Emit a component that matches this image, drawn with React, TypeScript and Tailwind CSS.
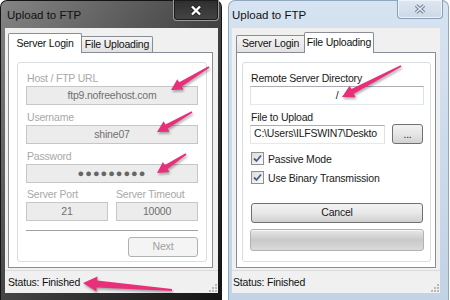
import React from "react";

function arrowPoints(
  x1: number, y1: number, x2: number, y2: number,
  tw = 1, bw = 2.2, hw = 6, hl = 11
) {
  const dx = x2 - x1, dy = y2 - y1;
  const L = Math.hypot(dx, dy);
  const ux = dx / L, uy = dy / L;
  const nx = -uy, ny = ux;
  const bx = x2 - ux * hl, by = y2 - uy * hl;
  const p = [
    [x1 + nx * tw, y1 + ny * tw],
    [bx + nx * bw, by + ny * bw],
    [bx + nx * hw, by + ny * hw],
    [x2, y2],
    [bx - nx * hw, by - ny * hw],
    [bx - nx * bw, by - ny * bw],
    [x1 - nx * tw, y1 - ny * tw],
  ];
  return p.map((q) => q.map((v) => v.toFixed(1)).join(",")).join(" ");
}

const arrows: [number, number, number, number, number, number, number, number][] = [
  [209, 67, 171, 90, 0.9, 2.4, 6, 11],
  [192, 112, 157, 132, 0.9, 2.4, 6, 11],
  [186, 154, 157, 173, 0.9, 2.4, 6, 11],
  [172, 290, 83, 283, 1, 3.5, 7.5, 14],
  [401, 66, 342, 97, 0.9, 2.6, 6.5, 12],
];

function Grip() {
  return (
    <svg width="8" height="8" viewBox="0 0 8 8" className="shrink-0">
      {[
        [6, 0], [6, 3], [3, 3], [6, 6], [3, 6], [0, 6],
      ].map(([x, y], i) => (
        <rect key={i} x={x} y={y} width="2" height="2" fill="#b9b9b9" />
      ))}
    </svg>
  );
}

function Check({ label }: { label: string }) {
  return (
    <div className="flex items-center h-[13px] gap-[4px] pl-[1px]">
      <div className="w-[13px] h-[13px] border border-[#8e8f8f] bg-gradient-to-br from-[#dcdcdc] to-[#fbfbfb] flex items-center justify-center">
        <svg width="11" height="11" viewBox="0 0 11 11">
          <path d="M2 5.5 L4.5 8 L9 2.5" fill="none" stroke="#4a5f84" strokeWidth="1.8" />
        </svg>
      </div>
      <span className="text-[#1a1a1a] leading-[12px]">{label}</span>
    </div>
  );
}

function LeftWindow() {
  return (
    <div className="relative w-[222px] h-[300px] shrink-0 rounded-t-[7px] border border-[#141414] border-b-0 bg-gradient-to-br from-[#858585] via-[#454545] to-[#141414] flex flex-col">
      <div className="h-[27px] flex items-start">
        <span className="pl-[6px] pt-[6px] text-[11.5px] leading-[16px] text-[#111] tracking-normal">Upload to FTP</span>
        <div className="ml-auto mr-[2px] -mt-[1px] w-[46px] h-[21px] rounded-b-[4px] border border-[#9a9a9a] border-t-0 bg-gradient-to-b from-[#2e2e2e] to-[#454545] shadow-[inset_0_0_0_1px_#1a1a1a] flex items-center justify-center">
          <svg width="12" height="11" viewBox="0 0 12 11">
            <path d="M2 1.5 L10 9.5 M10 1.5 L2 9.5" stroke="#222" strokeWidth="4" />
            <path d="M2 1.5 L10 9.5 M10 1.5 L2 9.5" stroke="#fff" strokeWidth="2.4" />
          </svg>
        </div>
      </div>
      <div className="ml-[4px] w-[213px] flex-1 mb-[7px] bg-[#f0f0f0] flex flex-col">
        <div className="pt-[5px] pl-[3px]">
          <div className="flex items-end h-[19px]">
            <div className="relative z-10 h-[20px] -mb-[1px] w-[74px] bg-white border border-[#898c95] border-b-0 rounded-t-[2px] flex items-center justify-center text-[#111]">
              Server Login
            </div>
            <div className="h-[16px] w-[71px] border border-[#898c95] border-l-0 border-b-0 rounded-tr-[2px] bg-gradient-to-b from-[#f5f5f5] to-[#e2e2e2] flex items-center justify-center text-[#111]">
              File Uploading
            </div>
          </div>
          <div className="w-[205px] h-[216px] bg-white border border-[#898c95] pt-[9px] pl-[8px]">
            <div className="w-[190px] h-[200px] border border-[#d8dde1] rounded-[3px] pt-[9px] pl-[8px] flex flex-col text-[#a8a8a8]">
              <span className="pl-[1px] leading-[12px]">Host / FTP URL</span>
              <div className="mt-[2px] w-[172px] h-[19px] border border-[#c6c6c6] bg-[#ececec] text-[#707070] flex items-center justify-center">ftp9.nofreehost.com</div>
              <span className="mt-[6px] pl-[1px] leading-[12px]">Username</span>
              <div className="mt-[2px] w-[172px] h-[19px] border border-[#c6c6c6] bg-[#ececec] text-[#707070] flex items-center justify-center">shine07</div>
              <span className="mt-[6px] pl-[1px] leading-[12px]">Password</span>
              <div className="mt-[2px] w-[172px] h-[19px] border border-[#c6c6c6] bg-[#ececec] text-[#666] flex items-center justify-center tracking-[1px] text-[11px]">●●●●●●●●●</div>
              <div className="mt-[5px] flex leading-[12px]">
                <span className="pl-[1px] w-[90px]">Server Port</span>
                <span>Server Timeout</span>
              </div>
              <div className="mt-[2px] flex gap-[8px]">
                <div className="w-[82px] h-[19px] border border-[#c6c6c6] bg-[#ececec] text-[#707070] flex items-center justify-center">21</div>
                <div className="w-[82px] h-[19px] border border-[#c6c6c6] bg-[#ececec] text-[#707070] flex items-center justify-center">10000</div>
              </div>
              <div className="mt-[9px] w-[172px] h-[2px] border-t border-[#a0a0a0] border-b border-b-white"></div>
              <div className="mt-[5px] w-[172px] flex justify-end">
                <div className="w-[70px] h-[20px] rounded-[3px] border border-[#adb2b5] bg-[#f4f4f4] text-[#a0a0a0] flex items-center justify-center">Next</div>
              </div>
            </div>
          </div>
        </div>
        <div className="mt-[2px] flex-1 border-t border-[#dadada] flex items-end justify-between pl-[3px] pr-[1px] pb-[1px]">
          <span className="mb-[4px] leading-[12px] text-[#111]">Status: Finished</span>
          <Grip />
        </div>
      </div>
    </div>
  );
}

function RightWindow() {
  return (
    <div className="relative ml-[6px] w-[221px] h-[300px] shrink-0 rounded-t-[7px] border border-[#8fa6bf] border-b-0 bg-gradient-to-b from-[#d6e3f1] to-[#c2d3e6] flex flex-col">
      <div className="h-[27px] flex items-start">
        <span className="pl-[3px] pt-[6px] text-[11.5px] leading-[16px] text-[#111] tracking-normal">Upload to FTP</span>
        <div className="ml-auto mr-[5px] -mt-[1px] w-[46px] h-[19px] rounded-b-[4px] border border-[#8a9db3] border-t-0 bg-gradient-to-b from-[#dfe8f2] to-[#cbd8e7] shadow-[inset_0_0_0_1px_#eef3f8] flex items-center justify-center">
          <svg width="12" height="10" viewBox="0 0 12 10">
            <path d="M2 1.5 L10 8.5 M10 1.5 L2 8.5" stroke="#6f7e8f" strokeWidth="3.6" />
            <path d="M2 1.5 L10 8.5 M10 1.5 L2 8.5" stroke="#e4ebf3" strokeWidth="1.6" />
          </svg>
        </div>
      </div>
      <div className="ml-[3px] w-[208px] flex-1 mb-[7px] bg-[#f0f0f0] flex flex-col">
        <div className="pt-[4px] pl-[4px]">
          <div className="flex items-end h-[20px]">
            <div className="h-[17px] w-[68px] border border-[#898c95] border-b-0 border-r-0 rounded-tl-[2px] bg-gradient-to-b from-[#f5f5f5] to-[#e2e2e2] flex items-center justify-center text-[#111]">
              Server Login
            </div>
            <div className="relative z-10 h-[21px] -mb-[1px] w-[70px] bg-white border border-[#898c95] border-b-0 rounded-t-[2px] flex items-center justify-center text-[#111]">
              File Uploading
            </div>
          </div>
          <div className="w-[200px] h-[216px] bg-white border border-[#898c95] pt-[9px] pl-[5px]">
            <div className="w-[189px] h-[200px] border border-[#d8dde1] rounded-[3px] pt-[9px] pl-[7px] flex flex-col text-[#1a1a1a]">
              <span className="pl-[1px] leading-[12px]">Remote Server Directory</span>
              <div className="mt-[2px] w-[174px] h-[19px] border border-[#abadb3] border-l-[#e2e3ea] border-r-[#dbdfe6] border-b-[#e3e9ef] bg-white flex items-center justify-center">/</div>
              <span className="mt-[6px] pl-[1px] leading-[12px]">File to Upload</span>
              <div className="mt-[1px] flex items-center h-[20px]">
                <div className="w-[135px] h-[19px] border border-[#abadb3] border-l-[#e2e3ea] border-r-[#dbdfe6] border-b-[#e3e9ef] bg-white flex items-center pl-[3px] overflow-hidden whitespace-nowrap">C:\Users\ILFSWIN7\Deskto</div>
                <div className="ml-[7px] w-[31px] h-[20px] rounded-[3px] border border-[#707070] bg-gradient-to-b from-[#f2f2f2] via-[#e6e6e6] to-[#d2d2d2] flex items-center justify-center leading-[10px]">...</div>
              </div>
              <div className="mt-[8px]"><Check label="Passive Mode" /></div>
              <div className="mt-[6px]"><Check label="Use Binary Transmission" /></div>
              <div className="mt-[19px] ml-[1px] w-[172px] h-[20px] rounded-[3px] border border-[#707070] bg-gradient-to-b from-[#f3f3f3] via-[#e8e8e8] to-[#d0d0d0] flex items-center justify-center">Cancel</div>
              <div className="mt-[6px] w-[174px] h-[22px] rounded-[3px] border border-[#b2b2b2] bg-gradient-to-b from-[#e8e8e8] via-[#c9c9c9] to-[#dadada] shadow-[inset_0_1px_0_#f5f5f5]"></div>
            </div>
          </div>
        </div>
        <div className="mt-[2px] flex-1 border-t border-[#dadada] flex items-end justify-between pl-[1px] pr-[1px] pb-[1px]">
          <span className="mb-[4px] leading-[12px] text-[#111]">Status: Finished</span>
          <Grip />
        </div>
      </div>
    </div>
  );
}

export default function App() {
  return (
    <div className="relative w-[450px] h-[300px] overflow-hidden bg-white flex font-['Liberation_Sans',Arial,sans-serif] text-[10.5px] tracking-[-0.2px]">
      <LeftWindow />
      <RightWindow />
      <svg
        width="450"
        height="300"
        className="absolute left-0 top-0 pointer-events-none drop-shadow-[1px_2px_1px_rgba(0,0,0,0.3)]"
      >
        {arrows.map((a, i) => (
          <polygon key={i} points={arrowPoints(a[0], a[1], a[2], a[3], a[4], a[5], a[6], a[7])} fill="#e8307a" />
        ))}
      </svg>
    </div>
  );
}
